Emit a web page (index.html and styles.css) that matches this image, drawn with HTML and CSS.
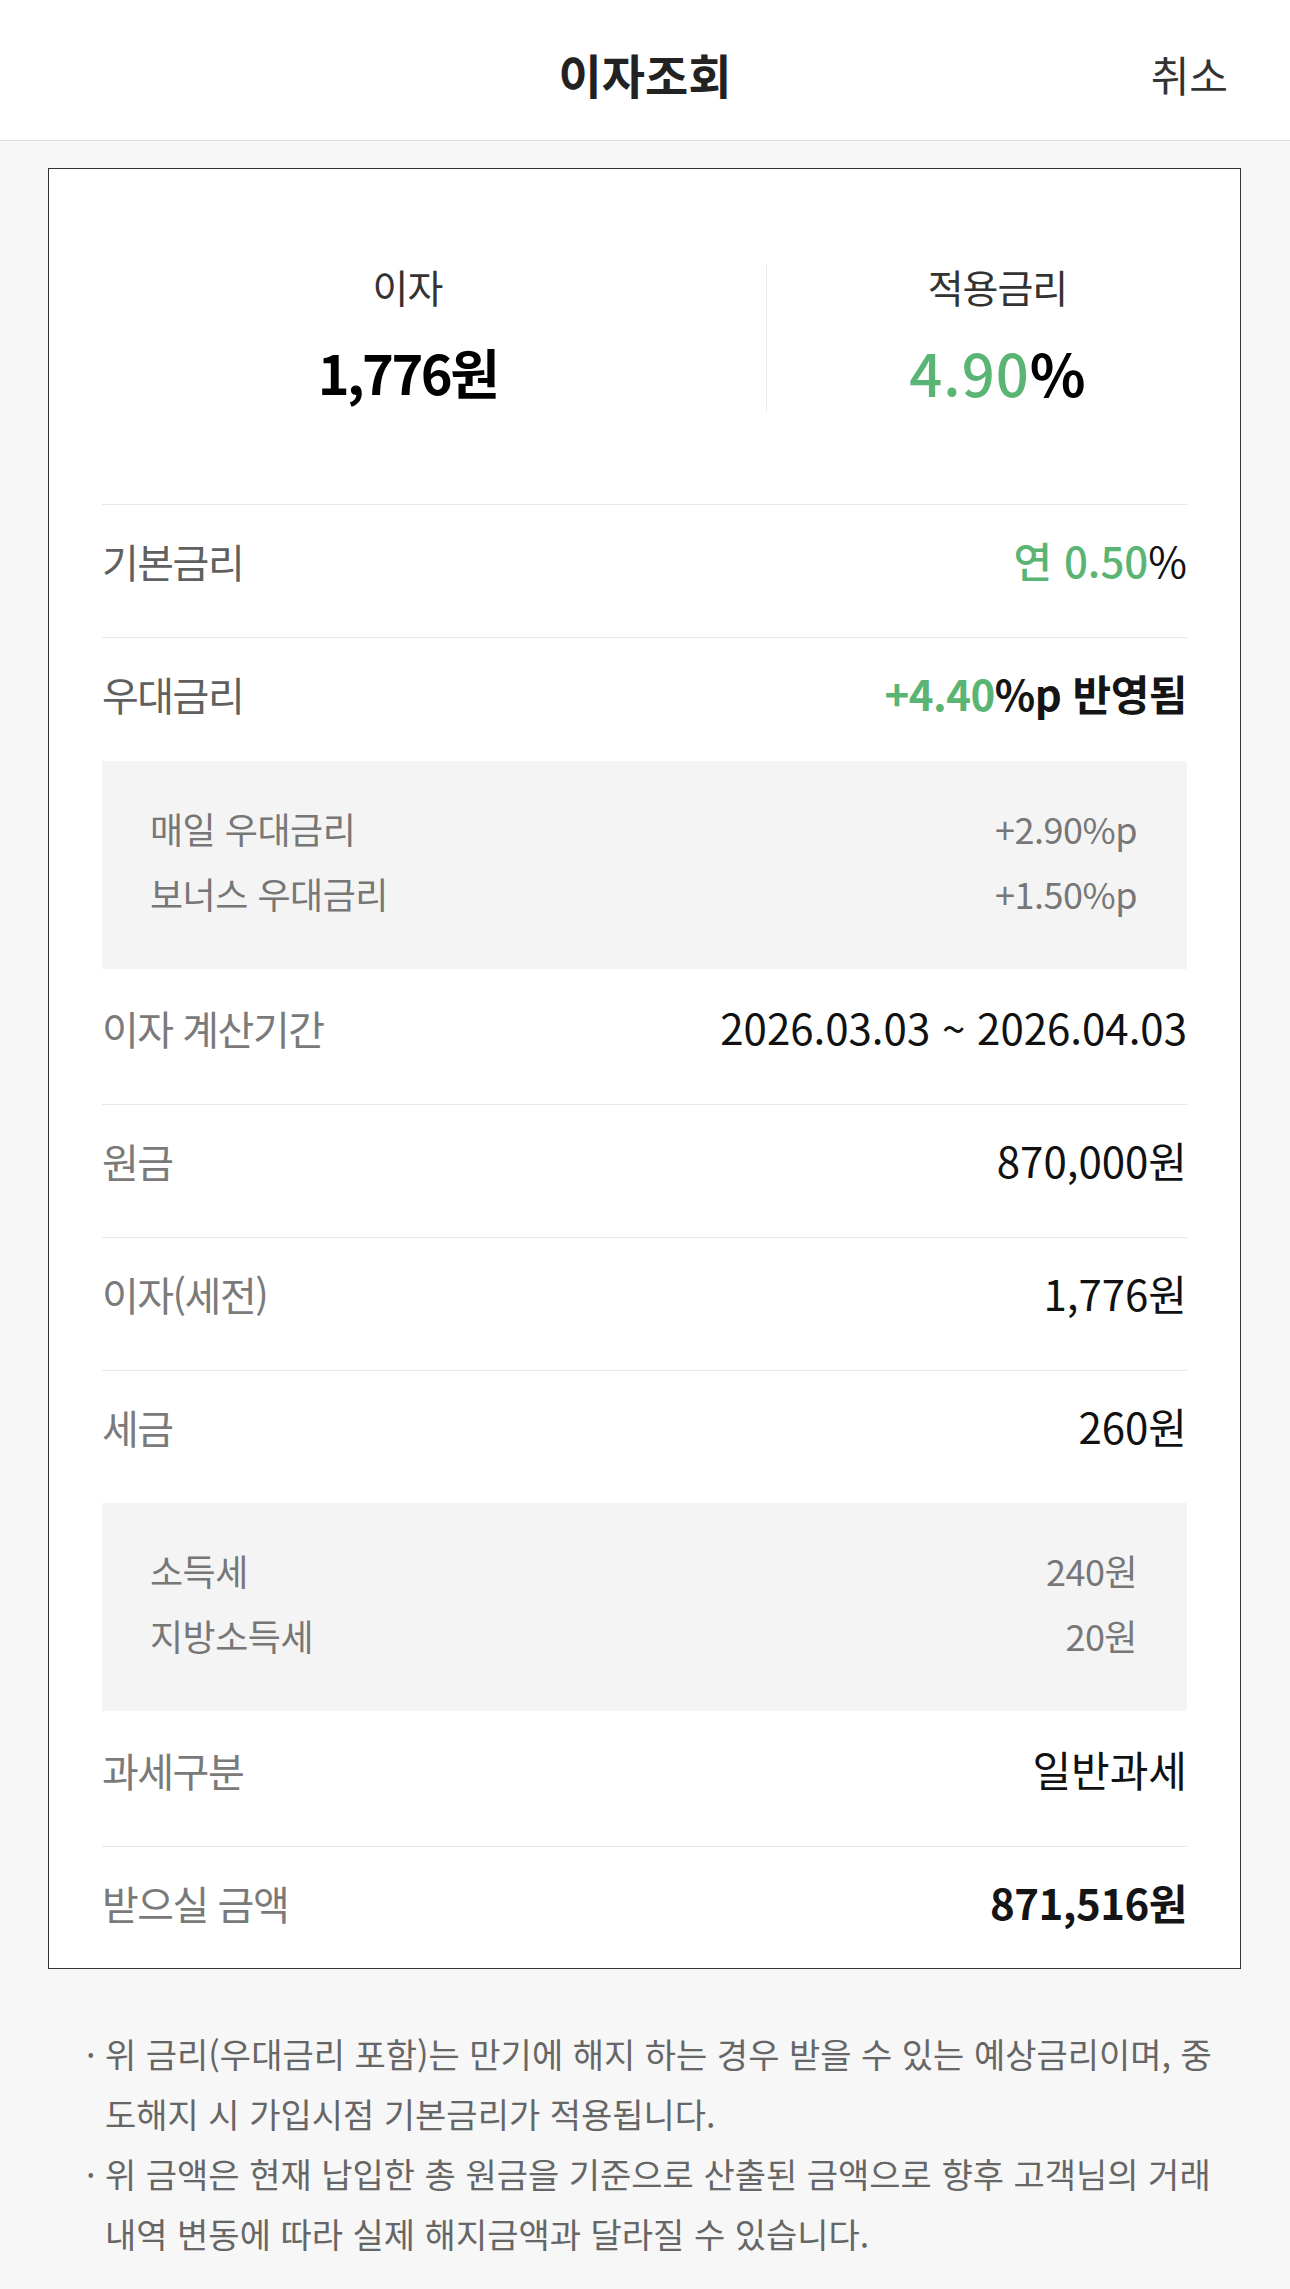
FILE: index.html
```html
<!DOCTYPE html>
<html lang="ko">
<head>
    <meta charset="utf-8">
    <title>이자조회</title>
    <link rel="stylesheet" href="styles.css">
</head>
<body>
    <header class="topbar">
        <span></span>
        <h1 class="title">이자조회</h1>
        <a class="cancel" href="#">취소</a>
    </header>

    <main class="page">
        <section class="card">
            <div class="summary">
                <div class="sum-col">
                    <p class="sum-label">이자</p>
                    <p class="sum-value">1,776원</p>
                </div>
                <div class="sum-col divided">
                    <p class="sum-label">적용금리</p>
                    <p class="sum-value rate"><span class="green">4.90</span>%</p>
                </div>
            </div>

            <div class="details">
                <div class="row">
                    <span class="label dark">기본금리</span>
                    <span class="value"><span class="green medium">연 0.50</span>%</span>
                </div>
                <div class="row tight">
                    <span class="label dark">우대금리</span>
                    <span class="value strong"><span class="green">+4.40</span>%p 반영됨</span>
                </div>
                <div class="sub">
                    <div class="sub-row">
                        <span>매일 우대금리</span>
                        <span>+2.90%p</span>
                    </div>
                    <div class="sub-row">
                        <span>보너스 우대금리</span>
                        <span>+1.50%p</span>
                    </div>
                </div>
                <div class="row">
                    <span class="label">이자 계산기간</span>
                    <span class="value">2026.03.03 ~ 2026.04.03</span>
                </div>
                <div class="row">
                    <span class="label">원금</span>
                    <span class="value">870,000원</span>
                </div>
                <div class="row">
                    <span class="label">이자(세전)</span>
                    <span class="value">1,776원</span>
                </div>
                <div class="row">
                    <span class="label">세금</span>
                    <span class="value">260원</span>
                </div>
                <div class="sub">
                    <div class="sub-row">
                        <span>소득세</span>
                        <span>240원</span>
                    </div>
                    <div class="sub-row">
                        <span>지방소득세</span>
                        <span>20원</span>
                    </div>
                </div>
                <div class="row">
                    <span class="label">과세구분</span>
                    <span class="value">일반과세</span>
                </div>
                <div class="row last">
                    <span class="label">받으실 금액</span>
                    <span class="value strong">871,516원</span>
                </div>
            </div>
        </section>

        <ul class="notes">
            <li><span class="dot">·</span><span>위 금리(우대금리 포함)는 만기에 해지 하는 경우 받을 수 있는 예상금리이며, 중도해지 시 가입시점 기본금리가 적용됩니다.</span></li>
            <li><span class="dot">·</span><span>위 금액은 현재 납입한 총 원금을 기준으로 산출된 금액으로 향후 고객님의 거래 내역 변동에 따라 실제 해지금액과 달라질 수 있습니다.</span></li>
        </ul>
    </main>
</body>
</html>
```

FILE: styles.css
```css
body {
    margin: 0;
    background-color: #f7f7f7;
    font-family: "Noto Sans CJK KR", "Noto Sans", sans-serif;
    color: #111;
}
p {
    margin: 0;
}

/* top bar */
.topbar {
    display: grid;
    grid-template-columns: 1fr auto 1fr;
    align-items: center;
    height: 141px;
    box-sizing: border-box;
    padding: 6px 62px 0;
    background-color: white;
    border-bottom: 1px solid #dedede;
}
.title {
    margin: 0;
    font-size: 47px;
    font-weight: bold;
    color: #222;
}
.cancel {
    justify-self: end;
    font-size: 42px;
    color: #333;
    text-decoration: none;
}

.page {
    padding: 27px 49px 60px 48px;
}

/* card */
.card {
    background-color: white;
    border: 1px solid #333;
}
.summary {
    display: grid;
    grid-template-columns: 717px 1fr;
    padding: 94px 12px 91px 0;
}
.sum-col {
    height: 150px;
    text-align: center;
}
.sum-col.divided {
    border-left: 1px solid #eee;
}
.sum-label {
    font-size: 39px;
    line-height: 46px;
    color: #333;
    letter-spacing: -1px;
}
.sum-value {
    margin-top: 28px;
    font-size: 54px;
    line-height: 70px;
    font-weight: bold;
    letter-spacing: -2.5px;
    color: #000;
}
.sum-value.rate {
    font-size: 58px;
    letter-spacing: 0;
}
.sum-value.rate .green {
    font-weight: 500;
    letter-spacing: 1px;
}
.green {
    color: #5ab574;
}
.medium {
    font-weight: 500;
}

/* detail rows */
.details {
    padding: 0 53px;
}
.row {
    display: flex;
    justify-content: space-between;
    align-items: baseline;
    box-sizing: border-box;
    height: 133px;
    padding-top: 29px;
    line-height: 52px;
    border-top: 1px solid #e8e8e8;
}
.row.tight {
    height: 124px;
}
.row.last {
    height: 122px;
}
.sub + .row {
    border-top: none;
    height: 135px;
    padding-top: 32px;
}
.label {
    font-size: 40px;
    color: #7a7a7a;
    letter-spacing: -1.5px;
}
.label.dark {
    color: #606060;
}
.value {
    font-size: 42px;
    color: #111;
}
.value.strong {
    font-weight: bold;
    color: #151515;
    letter-spacing: -0.5px;
}

.sub {
    padding: 35px 50px 43px 48px;
    background-color: #f4f4f4;
}
.sub-row {
    display: flex;
    justify-content: space-between;
    font-size: 36px;
    line-height: 65px;
    color: #777;
    letter-spacing: -0.5px;
}

/* footnotes */
.notes {
    list-style: none;
    margin: 55px 0 0;
    padding: 0 15px 0 38px;
    font-size: 34px;
    line-height: 60px;
    color: #666;
}
.notes li {
    display: flex;
}
.dot {
    flex: 0 0 19px;
}
```
